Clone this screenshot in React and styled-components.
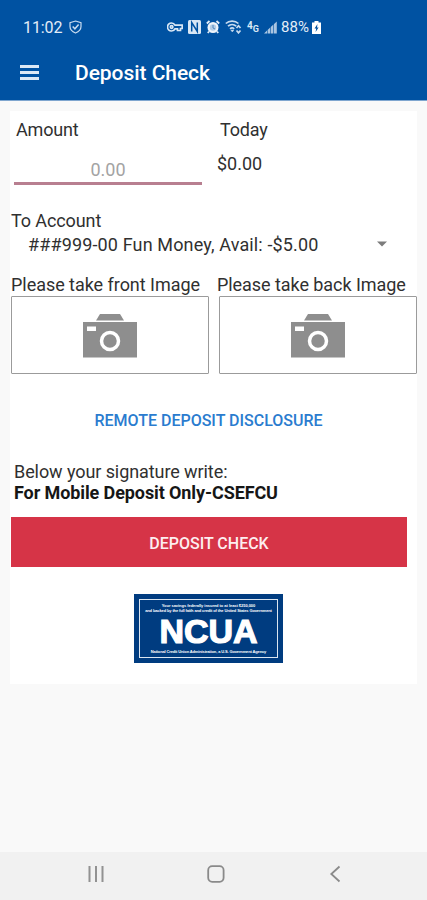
import React from "react";
import styled, { createGlobalStyle } from "styled-components";

const App = () => {
  return (
    <Screen>
      <GlobalStyle />
      <Header>
        <StatusBar>
          <Clock>11:02</Clock>
          <ShieldIcon />
          <StatusIcons>
            <KeyIcon />
            <NfcIcon />
            <AlarmIcon />
            <WifiIcon />
            <NetworkIcon />
            <SignalIcon />
            <BatteryLevel>88%</BatteryLevel>
            <BatteryIcon />
          </StatusIcons>
        </StatusBar>
        <TitleBar>
          <MenuButton aria-label="Menu">
            <MenuLine />
            <MenuLine />
            <MenuLine />
          </MenuButton>
          <Title>Deposit Check</Title>
        </TitleBar>
      </Header>

      <Content>
        <Card>
          <AmountRow>
            <AmountColumn>
              <AmountLabel>Amount</AmountLabel>
              <AmountInput placeholder="0.00" />
            </AmountColumn>
            <TodayColumn>
              <TodayLabel>Today</TodayLabel>
              <TodayValue>$0.00</TodayValue>
            </TodayColumn>
          </AmountRow>

          <AccountLabel>To Account</AccountLabel>
          <AccountSelect>
            <AccountName>###999-00 Fun Money, Avail: -$5.00</AccountName>
            <svg width="10" height="6" viewBox="0 0 10 6">
              <path d="M0 0.5h10L5 5.5z" fill="#7c7c7c" />
            </svg>
          </AccountSelect>

          <ImageRow>
            <ImageColumn>
              <ImageLabel $spacing="-0.04px">Please take front Image</ImageLabel>
              <ImageBox>
                <CameraIcon />
              </ImageBox>
            </ImageColumn>
            <ImageColumn>
              <ImageLabel $spacing="-0.06px" $shift="-2px">
                Please take back Image
              </ImageLabel>
              <ImageBox>
                <CameraIcon />
              </ImageBox>
            </ImageColumn>
          </ImageRow>

          <DisclosureLink>REMOTE DEPOSIT DISCLOSURE</DisclosureLink>

          <Signature>
            <SignatureHint>Below your signature write:</SignatureHint>
            <SignatureText>For Mobile Deposit Only-CSEFCU</SignatureText>
          </Signature>

          <DepositButton>DEPOSIT CHECK</DepositButton>
          <NcuaLogo />
        </Card>
      </Content>

      <NavBar>
        <svg width="18" height="18" viewBox="0 0 18 18">
          <path d="M2.5 1v16M9 1v16M15.5 1v16" stroke="#929292" strokeWidth="2" />
        </svg>
        <svg width="18" height="18" viewBox="0 0 18 18">
          <rect x="1.2" y="1.2" width="15.4" height="15.6" rx="4" fill="none" stroke="#8a8a8a" strokeWidth="1.8" />
        </svg>
        <svg width="18" height="18" viewBox="0 0 18 18">
          <path d="M13.5 1.5L5.3 9l8.2 7.5" fill="none" stroke="#8a8a8a" strokeWidth="1.8" />
        </svg>
      </NavBar>
    </Screen>
  );
};

const ShieldIcon = () => (
  <svg width="13" height="14" viewBox="0 0 13 14" fill="none" stroke="#c9dcf0">
    <path d="M6.5 1L12 2.6v4c0 3-2.3 5.2-5.5 6.4C3.3 11.8 1 9.6 1 6.6v-4z" strokeWidth="1.2" />
    <path d="M3.7 6.5l2.2 2.3 3.7-4.3" strokeWidth="1.5" />
  </svg>
);

const KeyIcon = () => (
  <svg width="16" height="10" viewBox="0 0 16 10" fill="none" stroke="#d9e7f5" strokeWidth="1.7">
    <path d="M8 3.2C7.3 1.8 6 1 4.5 1a4 4 0 0 0 0 8C6 9 7.3 8.2 8 6.8h2.5v1.7h3V6.5h1.7V3.2z" />
    <circle cx="4.6" cy="5" r="1.3" />
  </svg>
);

const NfcIcon = () => (
  <svg width="13" height="14" viewBox="0 0 13 14">
    <rect width="13" height="14" rx="1.5" fill="#d9e7f5" />
    <path d="M3.7 11.5v-9l5.6 9v-9" fill="none" stroke="#0052a2" strokeWidth="1.5" />
  </svg>
);

const AlarmIcon = () => (
  <svg width="14" height="14" viewBox="0 0 14 14">
    <path d="M0.8 3.5L3.5 1M13.2 3.5L10.5 1M3 11.5L1.8 13M11 11.5L12.2 13" stroke="#e3edf8" strokeWidth="1.8" />
    <circle cx="7" cy="7.5" r="5.5" fill="#eef4fb" />
    <circle cx="7" cy="7.5" r="3.2" fill="#b4cde6" />
    <path d="M7 5v3l2 1" fill="none" stroke="#4f88c0" strokeWidth="1" />
  </svg>
);

const WifiIcon = () => (
  <svg width="17" height="14" viewBox="0 0 17 14" fill="none" stroke="#c9dcf0" strokeWidth="1.7">
    <path d="M0.8 3.5C4.2 0.3 10 0.3 13.4 3.5M3 6.2c2.4-2.2 5.8-2.2 8.2 0M5 8.8c1.2-1.1 3-1.1 4.2 0" />
    <path d="M5.8 10h3L7.3 12z" fill="#c9dcf0" strokeWidth="0.5" />
    <path d="M11.5 8l2-2.3 2 2.3M11.5 10.5l2 2.3 2-2.3" />
  </svg>
);

const NetworkIcon = () => (
  <SmallGlyph>
    <span>4</span>
    <sub>G</sub>
  </SmallGlyph>
);

const SignalIcon = () => (
  <svg width="13" height="13" viewBox="0 0 13 13" fill="#a9c5e2">
    <path d="M0 12.5L3 9.5v3zM3.6 9l2.6-2.5v6H3.6zM6.8 6l2.6-2.5v9H6.8zM10 3l2.8-2.5v12H10z" />
  </svg>
);

const BatteryIcon = () => (
  <svg width="9" height="13" viewBox="0 0 9 13">
    <path d="M2.5 0h4v1.5H9V13H0V1.5h2.5z" fill="#fff" />
    <path d="M5.5 3L2.5 7.5h1.7L3.6 11l3-4.5H5z" fill="#0052a2" />
  </svg>
);

const CameraIcon = () => (
  <svg width="54" height="45" viewBox="0 0 54 45">
    <path d="M17 1h20l4 6.5H13z" fill="#8e8e8e" />
    <rect y="9" width="54" height="35.5" fill="#8e8e8e" />
    <rect x="4" y="13.5" width="9" height="4.5" fill="#fff" />
    <circle cx="27" cy="28" r="8.5" fill="#8e8e8e" stroke="#fff" strokeWidth="3.5" />
  </svg>
);

const NcuaLogo = () => (
  <Logo>
    <LogoFrame>
      <LogoSmall $spacing="-0.04px">
        Your savings federally insured to at least $250,000
      </LogoSmall>
      <LogoSmall $spacing="-0.12px">
        and backed by the full faith and credit of the United States Government
      </LogoSmall>
      <LogoName>NCUA</LogoName>
      <LogoSmall $spacing="-0.13px">
        National Credit Union Administration, a U.S. Government Agency
      </LogoSmall>
    </LogoFrame>
  </Logo>
);

const GlobalStyle = createGlobalStyle`
  * {
    box-sizing: border-box;
  }
  body {
    margin: 0;
    font-family: Roboto, "Liberation Sans", sans-serif;
    color: #303030;
  }
  svg {
    display: block;
    flex: none;
  }
`;

const Screen = styled.div`
  width: 427px;
  height: 900px;
  display: flex;
  flex-direction: column;
  background: #f9f9f9;
  overflow: hidden;
`;

const Header = styled.header`
  height: 101px;
  flex: none;
  background: #0052a2;
  color: #fff;
  border-bottom: 1px solid #7fa6cf;
`;

const StatusBar = styled.div`
  height: 44px;
  padding: 10px 0 0 23px;
  display: flex;
  align-items: center;
`;

const Clock = styled.span`
  width: 46px;
  font-size: 16px;
  letter-spacing: -0.1px;
  color: #e3edf8;
`;

const StatusIcons = styled.div`
  margin-left: 85px;
  display: flex;
  align-items: center;
  gap: 5px;
`;

const SmallGlyph = styled.span`
  width: 12px;
  height: 14px;
  font-size: 10px;
  font-weight: 700;
  line-height: 12px;
  color: #d9e7f5;
  display: flex;
  sub {
    font-size: 9px;
    line-height: 19px;
    vertical-align: baseline;
  }
`;

const BatteryLevel = styled.span`
  width: 26px;
  margin-left: -1px;
  font-size: 15px;
  letter-spacing: 0.1px;
  color: #e3edf8;
  white-space: nowrap;
`;

const TitleBar = styled.div`
  height: 56px;
  padding: 0 0 0 20px;
  display: flex;
  align-items: center;
`;

const MenuButton = styled.button`
  width: 19px;
  height: 15px;
  padding: 0;
  border: 0;
  background: none;
  display: flex;
  flex-direction: column;
  justify-content: space-between;
`;

const MenuLine = styled.span`
  width: 100%;
  height: 3px;
  background: #dce8f5;
`;

const Title = styled.h1`
  margin: 2px 0 0 36px;
  font-size: 21px;
  font-weight: 500;
  letter-spacing: -0.05px;
`;

const Content = styled.main`
  flex: 1;
  padding: 10px 10px 0;
`;

const Card = styled.section`
  height: 573px;
  background: #fff;
  overflow: hidden;
`;

const AmountRow = styled.div`
  height: 99px;
  display: flex;
`;

const AmountColumn = styled.div`
  width: 192px;
  padding: 8px 0 0 4px;
`;

const AmountLabel = styled.div`
  padding-left: 2px;
  font-size: 18px;
  line-height: 22px;
  letter-spacing: -0.2px;
`;

const AmountInput = styled.input`
  display: block;
  width: 188px;
  height: 34px;
  margin-top: 10px;
  padding: 5px 0 0;
  border: 0;
  border-bottom: 3px solid #b87f90;
  background: none;
  outline: none;
  font-family: inherit;
  font-size: 18px;
  text-align: center;
  &::placeholder {
    color: #a3a3a3;
    opacity: 1;
  }
`;

const TodayColumn = styled.div`
  padding: 8px 0 0 15px;
`;

const TodayLabel = styled.div`
  padding-left: 3px;
  font-size: 18px;
  line-height: 22px;
  letter-spacing: -0.2px;
`;

const TodayValue = styled.div`
  margin-top: 12px;
  font-size: 18px;
  line-height: 22px;
`;

const AccountLabel = styled.div`
  padding-left: 1px;
  font-size: 18px;
  line-height: 22px;
  letter-spacing: -0.1px;
`;

const AccountSelect = styled.div`
  height: 24px;
  padding: 0 30px 0 18px;
  display: flex;
  align-items: center;
  justify-content: space-between;
`;

const AccountName = styled.span`
  font-size: 18px;
  letter-spacing: 0.14px;
  white-space: nowrap;
`;

const ImageRow = styled.div`
  margin-top: 18px;
  padding-left: 1px;
  display: flex;
  gap: 10px;
`;

const ImageColumn = styled.div`
  width: 198px;
  flex: none;
`;

const ImageLabel = styled.div`
  margin-left: ${(props) => props.$shift || 0};
  font-size: 18px;
  line-height: 22px;
  letter-spacing: ${(props) => props.$spacing};
  white-space: nowrap;
`;

const ImageBox = styled.div`
  height: 78px;
  border: 1px solid #9b9b9b;
  border-radius: 1px;
  display: flex;
  align-items: center;
  justify-content: center;
`;

const DisclosureLink = styled.a`
  display: block;
  height: 22px;
  margin-top: 36px;
  padding-right: 10px;
  font-size: 16px;
  font-weight: 500;
  line-height: 22px;
  text-align: center;
  color: #2a7ccf;
`;

const Signature = styled.div`
  margin-top: 29px;
  padding-left: 4px;
  line-height: 21px;
`;

const SignatureHint = styled.div`
  font-size: 18px;
  letter-spacing: -0.08px;
`;

const SignatureText = styled.div`
  font-size: 18px;
  font-weight: 700;
  letter-spacing: -0.1px;
  color: #161616;
`;

const DepositButton = styled.button`
  display: block;
  width: 396px;
  height: 50px;
  margin: 14px 0 0 1px;
  padding: 2px 0 0;
  border: 0;
  background: #d63447;
  color: #fdeef0;
  font-family: inherit;
  font-size: 16px;
  font-weight: 500;
`;

const Logo = styled.div`
  width: 149px;
  height: 69px;
  margin: 27px 0 0 124px;
  padding: 5px;
  background: #003c80;
`;

const LogoFrame = styled.div`
  height: 59px;
  border: 1px solid #dbe5f0;
  padding-top: 3px;
  color: #fff;
  display: flex;
  flex-direction: column;
  align-items: center;
`;

const LogoSmall = styled.div`
  font-family: "Liberation Sans", sans-serif;
  font-size: 4px;
  font-weight: 700;
  line-height: 5px;
  letter-spacing: ${(props) => props.$spacing};
  white-space: nowrap;
`;

const LogoName = styled.div`
  font-family: "Liberation Sans", sans-serif;
  font-size: 34px;
  font-weight: 700;
  line-height: 36px;
  -webkit-text-stroke: 1.2px #fff;
`;

const NavBar = styled.nav`
  height: 48px;
  flex: none;
  padding: 0 83px 4px 87px;
  background: #f1f1f1;
  display: flex;
  align-items: center;
  justify-content: space-between;
`;

export default App;
